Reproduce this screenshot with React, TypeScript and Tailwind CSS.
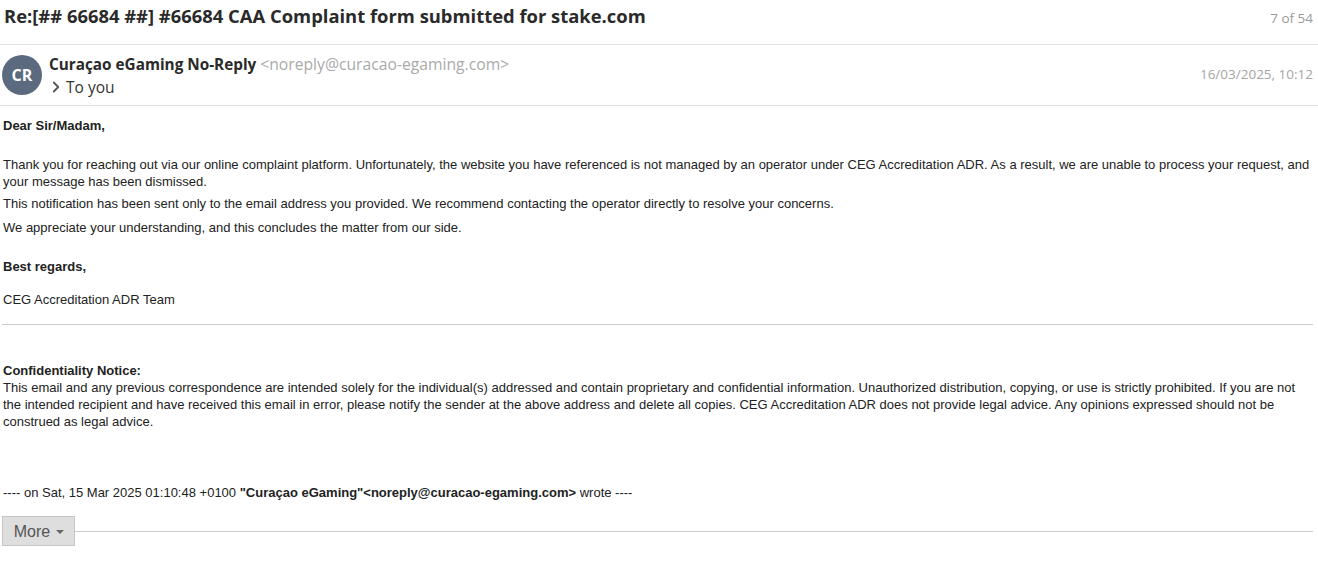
import { ChevronRight } from 'lucide-react';

export default function App() {
  return (
    <div className="w-[1318px] h-[565px] bg-white overflow-hidden font-['Open_Sans',sans-serif]">
      {/* Subject bar */}
      <div className="h-[45px] flex items-start justify-between border-b border-[#e0e0e0] pl-[4px] pr-[5px] pt-[3px]">
        <h1 className="text-[18.4px] font-bold text-[#2a2a2a] leading-[26px]">
          Re:[## 66684 ##] #66684 CAA Complaint form submitted for stake.com
        </h1>
        <span className="text-[13.5px] text-[#9a9a9a] leading-[26px] pt-[2px]">7 of 54</span>
      </div>

      {/* Sender */}
      <div className="h-[61px] flex items-start justify-between border-b border-[#e0e0e0] pl-[2px] pr-[5px]">
        <div className="flex items-start gap-[7px] pt-[10px]">
          <div className="w-[40px] h-[40px] rounded-full bg-[#5c6a80] flex items-center justify-center text-white text-[16px] font-bold">
            CR
          </div>
          <div className="flex flex-col -mt-[2px]">
            <div className="text-[15.3px] leading-[22px]">
              <span className="font-bold text-[#2a2a2a]">Curaçao eGaming No-Reply</span>{' '}
              <span className="text-[15.7px] text-[#aaaaaa]">&lt;noreply@curacao-egaming.com&gt;</span>
            </div>
            <div className="flex items-center text-[15.5px] leading-[22px] text-[#333] mt-[1px]">
              <ChevronRight className="w-[18px] h-[18px] text-[#555] -ml-[2px]" strokeWidth={2.4} />
              <span className="ml-[1px]">To you</span>
            </div>
          </div>
        </div>
        <span className="text-[13.5px] text-[#a5a5a5] pt-[19px]">16/03/2025, 10:12</span>
      </div>

      {/* Body */}
      <div className="px-[2px] pr-[5px] font-['Liberation_Sans',Arial,sans-serif] text-[13px] text-[#222] leading-[17px]">
        <p className="font-bold mt-[11px] pl-[1px]">Dear Sir/Madam,</p>
        <p className="mt-[22px] pl-[1px]">
          Thank you for reaching out via our online complaint platform. Unfortunately, the website you have referenced is not managed by an operator under CEG Accreditation ADR. As a result, we are unable to process your request, and your message has been dismissed.
        </p>
        <p className="mt-[5px] pl-[1px]">
          This notification has been sent only to the email address you provided. We recommend contacting the operator directly to resolve your concerns.
        </p>
        <p className="mt-[7px] pl-[1px]">We appreciate your understanding, and this concludes the matter from our side.</p>
        <p className="font-bold mt-[22px] pl-[1px]">Best regards,</p>
        <p className="mt-[16px] pl-[1px]">CEG Accreditation ADR Team</p>
        <hr className="mt-[16px] border-0 border-t border-[#cccccc]" />

        <p className="font-bold mt-[38px] pl-[1px] leading-[16px]">Confidentiality Notice:</p>
        <p className="pl-[1px] leading-[17px]">
          This email and any previous correspondence are intended solely for the individual(s) addressed and contain proprietary and confidential information. Unauthorized distribution, copying, or use is strictly prohibited. If you are not the intended recipient and have received this email in error, please notify the sender at the above address and delete all copies. CEG Accreditation ADR does not provide legal advice. Any opinions expressed should not be construed as legal advice.
        </p>

        <p className="mt-[54px] pl-[1px]">
          ---- on Sat, 15 Mar 2025 01:10:48 +0100{' '}
          <b>"Curaçao eGaming"&lt;noreply@curacao-egaming.com&gt;</b> wrote ----
        </p>

        <div className="flex items-center mt-[15px]">
          <button className="h-[30px] w-[73px] flex items-center justify-center gap-[6px] bg-[#dedede] border border-[#c6c6c6] text-[16px] text-[#555] pl-[1px]">
            More
            <span className="w-0 h-0 border-l-[4px] border-r-[4px] border-t-[4px] border-l-transparent border-r-transparent border-t-[#666] mt-[2px]" />
          </button>
          <div className="flex-1 border-t border-[#cccccc]" />
        </div>
      </div>
    </div>
  );
}
